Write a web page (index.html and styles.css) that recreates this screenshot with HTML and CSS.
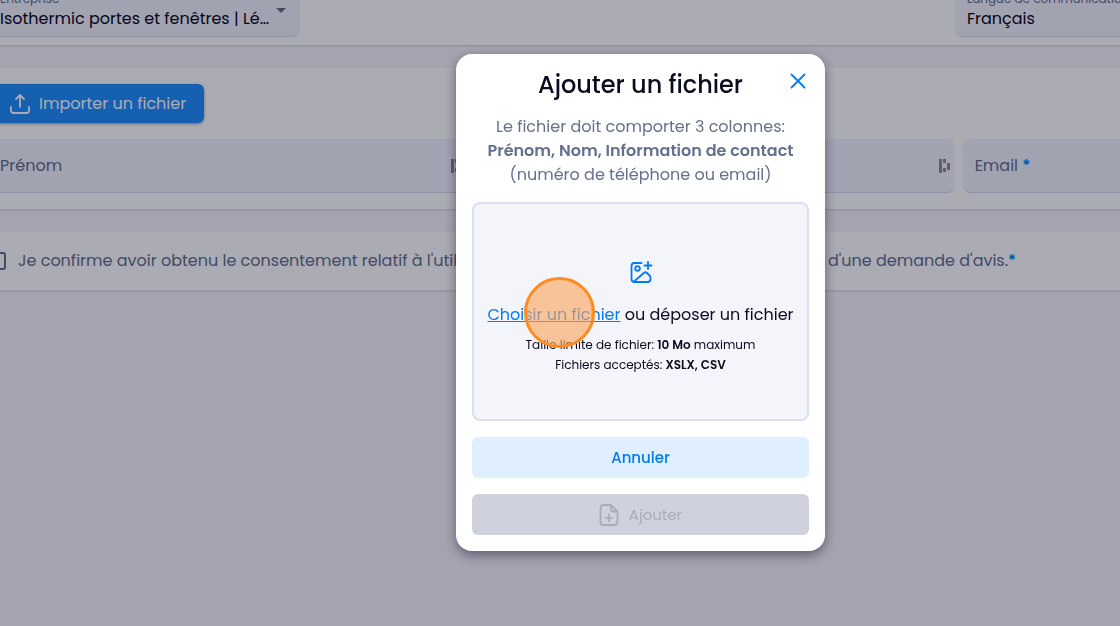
FILE: index.html
```html
<!DOCTYPE html>
<html lang="fr">
<head>
<meta charset="UTF-8">
<meta name="viewport" content="width=device-width, initial-scale=1.0">
<title>Ajouter un fichier</title>
<link rel="stylesheet" href="styles.css">
</head>
<body>

<main class="page">

<section class="card card-top">
  <div class="field field-select">
    <label for="company">Entreprise</label>
    <select id="company">
      <option>Isothermic portes et fenêtres | Lé…</option>
    </select>
    <span class="arrow"></span>
  </div>
  <div class="field field-select language">
    <label for="language">Langue de communication</label>
    <select id="language">
      <option>Français</option>
      <option>English</option>
    </select>
  </div>
</section>

<section class="card card-contacts">
  <button type="button" class="btn-import">
    <svg width="22" height="22" viewBox="0 0 22 22" fill="none" stroke="currentColor" stroke-width="1.8" stroke-linecap="round" stroke-linejoin="round">
      <path d="M11 14V2M7 6L11 2L15 6M2 14v3.500q0 2.500 2.500 2.500h13q2.500 0 2.500-2.500V14"/>
    </svg>
    Importer un fichier
  </button>
  <div class="fields">
    <div class="field">
      <input type="text" id="firstname" aria-label="Prénom" placeholder="Prénom">
      <svg class="autofill" width="12" height="16" viewBox="0 0 12 16" fill="#8c8c90">
        <path d="M0 1h3v14H0zM4 1h3v4H4zM4 10h3v4H4zM8 5h3v7H8z"/>
      </svg>
    </div>
    <div class="field">
      <input type="text" id="lastname" aria-label="Nom" placeholder="Nom">
      <svg class="autofill" width="12" height="16" viewBox="0 0 12 16" fill="#8c8c90">
        <path d="M0 1h3v14H0zM4 1h3v4H4zM4 10h3v4H4zM8 5h3v7H8z"/>
      </svg>
    </div>
    <div class="field">
      <label class="inside" for="email">Email <span class="star">*</span></label>
      <input type="email" id="email">
    </div>
  </div>
</section>

<section class="card card-consent">
  <input type="checkbox" id="consent">
  <label for="consent">Je confirme avoir obtenu le consentement relatif à l'utilisation des données de contact dans le cadre d'une demande d'avis.<span class="star">*</span></label>
</section>

</main>

<div class="overlay">
  <div class="modal" role="dialog" aria-labelledby="modal-title">
    <h1 id="modal-title">Ajouter un fichier</h1>
    <button type="button" class="close" aria-label="Fermer">
      <svg width="16" height="16" viewBox="0 0 16 16" fill="none" stroke="currentColor" stroke-width="1.8" stroke-linecap="round">
        <path d="M1.500 1.500l13 13M14.500 1.500l-13 13"/>
      </svg>
    </button>
    <p class="intro">Le fichier doit comporter 3 colonnes:<br>
      <strong>Prénom, Nom, Information de contact</strong><br>
      (numéro de téléphone ou email)</p>

    <div class="dropzone">
      <svg width="24" height="24" viewBox="0 0 24 24" fill="none" stroke="#007bf5" stroke-width="1.8" stroke-linecap="round" stroke-linejoin="round">
        <path d="M12.500 3H5.500Q2.500 3 2.500 6v13q0 3 3 3h13q3 0 3-3v-1q0-1.500-1-2.500l-2.500-2.500q-1.500-1.500-3.200 0L5 21.500"/>
        <circle cx="8.500" cy="8.500" r="2.300"/>
        <path d="M19 2v7M15.500 5.500h7"/>
      </svg>
      <p class="choose"><a href="#">Choisir un fichier</a> ou déposer un fichier</p>
      <p class="limits">Taille limite de fichier: <strong>10 Mo</strong> maximum<br>
        Fichiers acceptés: <strong>XSLX, CSV</strong></p>
      <span class="pointer"></span>
    </div>

    <button type="button" class="btn btn-cancel">Annuler</button>
    <button type="button" class="btn btn-add" disabled>
      <svg width="20" height="22" viewBox="0 0 20 22" fill="none" stroke="currentColor" stroke-width="1.8" stroke-linecap="round" stroke-linejoin="round">
        <path d="M12 1H4.500Q1.500 1 1.500 4v14q0 3 3 3h11q3 0 3-3V7.500zM12 1v3.500q0 3 3 3h3.500M10 10.500v6.500M6.800 13.800h6.400"/>
      </svg>
      Ajouter
    </button>
  </div>
</div>

</body>
</html>
```

FILE: styles.css
```css
* {
  box-sizing: border-box;
}

body {
  margin: 0;
  height: 100vh;
  overflow: hidden;
  background-color: #f5f5fb;
  color: #0a0a20;
  font-family: Poppins, Inter, sans-serif;
  font-size: 16px;
  line-height: 24px;
}

button,
input,
select {
  font: inherit;
  color: inherit;
}

h1,
p {
  margin: 0;
}

/* the form is wider than the window and scrolled to the right */
.page {
  width: calc(130vw - 2px);
  margin: -17px 0 0 -12px;
}

.card {
  margin-bottom: 23px;
  background-color: #fff;
  box-shadow: 0 1px 2px rgba(60, 60, 90, 0.2);
}

.card-top {
  display: flex;
  justify-content: space-between;
  padding-bottom: 8px;
}

.card-contacts {
  padding: 16px 0;
}

.card-consent {
  display: flex;
  align-items: center;
  gap: 12px;
  height: 58px;
  color: #64708c;
}

.field {
  position: relative;
  height: 54px;
  background-color: #f0f4fd;
  border-bottom: 1px solid #d0dcf4;
  border-radius: 8px;
}

.field-select {
  width: 312px;
  padding: 8px 12px 0;
}

.language {
  width: 487px;
}

.field-select label {
  display: block;
  font-size: 12px;
  line-height: 16px;
  color: #64708c;
}

.field select {
  display: block;
  width: 100%;
  height: 24px;
  padding: 0;
  border: none;
  background: none;
  appearance: none;
}

.arrow {
  position: absolute;
  right: 14px;
  top: 25px;
  border: 5px solid transparent;
  border-top-color: #64708c;
  border-bottom: none;
}

.fields {
  display: grid;
  grid-template-columns: repeat(3, 1fr);
  gap: 8px;
  margin-top: 16px;
}

.field input {
  width: 100%;
  height: 100%;
  padding: 0 12px;
  border: none;
  background: none;
}

.field input::placeholder {
  color: #64708c;
  opacity: 1;
}

.inside {
  position: absolute;
  left: 12px;
  top: 15px;
  color: #64708c;
}

.autofill {
  position: absolute;
  right: 4px;
  top: 19px;
}

.star {
  color: #007bf5;
  font-weight: 500;
}

.btn-import {
  display: flex;
  align-items: center;
  gap: 8px;
  height: 39px;
  padding: 0 18px 0 21px;
  border: none;
  border-radius: 6px;
  background-color: #228ffc;
  color: #fff;
  box-shadow: 0 1px 3px rgba(0, 0, 40, 0.4);
}

.card-consent input {
  appearance: none;
  width: 18px;
  height: 18px;
  margin: 0;
  border: 2px solid #64708c;
  border-radius: 3px;
}

.overlay {
  position: fixed;
  inset: 0;
  display: flex;
  justify-content: center;
  align-items: flex-start;
  padding: 54px 0 0 161px;
  background-color: rgba(0, 0, 24, 0.33);
}

.modal {
  position: relative;
  width: 369px;
  padding: 13px 16px 16px;
  border-radius: 16px;
  background-color: #fff;
  text-align: center;
  box-shadow: 0 4px 12px rgba(20, 20, 50, 0.5);
}

.modal h1 {
  font-size: 24px;
  line-height: 36px;
  font-weight: 500;
}

.close {
  position: absolute;
  top: 19px;
  right: 19px;
  display: flex;
  padding: 0;
  border: none;
  background: none;
  color: #007bf5;
}

.intro {
  margin: 12px 0 15px;
  color: #64708c;
}

strong {
  font-weight: 600;
}

.dropzone {
  position: relative;
  height: 219px;
  padding-top: 56px;
  border: 2px solid #dcdff0;
  border-radius: 8px;
  background-color: #f4f5fb;
}

.dropzone svg {
  display: block;
  margin: 0 auto;
}

.choose {
  margin: 19px 0 8px;
}

.choose a {
  color: #007bf5;
}

.limits {
  font-size: 12px;
  line-height: 20px;
}

.pointer {
  position: absolute;
  left: 50px;
  top: 73px;
  width: 71px;
  height: 71px;
  border: 3px solid #ff8c22;
  border-radius: 50%;
  background-color: rgba(250, 164, 90, 0.62);
}

.btn {
  display: flex;
  align-items: center;
  justify-content: center;
  gap: 10px;
  width: 100%;
  height: 41px;
  margin-top: 16px;
  border: none;
  border-radius: 6px;
  font-size: 15px;
}

.btn-cancel {
  background-color: #e0efff;
  color: #007bf5;
  font-weight: 500;
}

.btn-add {
  background-color: #cfd1dc;
  color: #a9adbb;
}
```
